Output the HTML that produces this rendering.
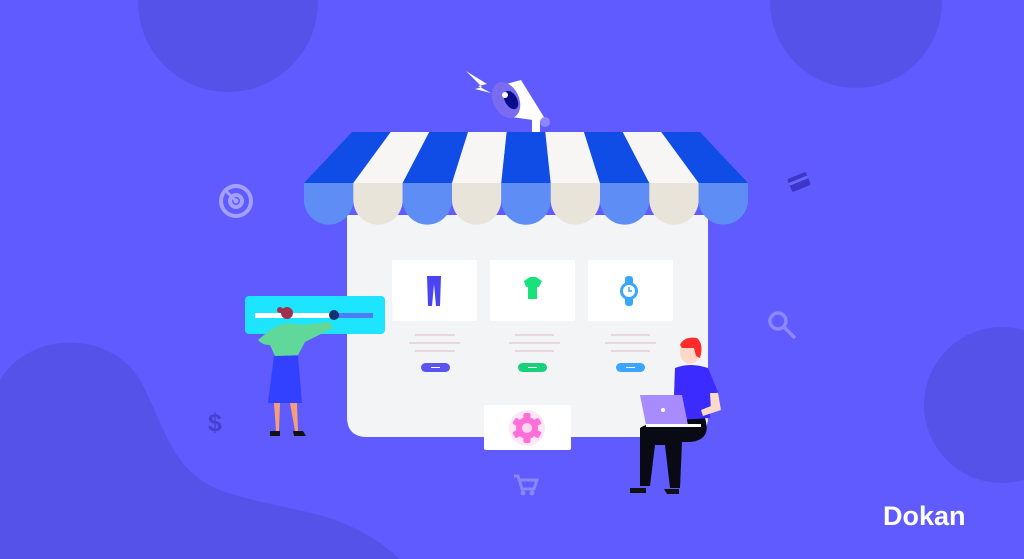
<!DOCTYPE html>
<html><head><meta charset="utf-8"><style>
html,body{margin:0;padding:0;background:#5f5bff;}
svg{display:block}
</style></head><body>
<svg width="1024" height="559" viewBox="0 0 1024 559" xmlns="http://www.w3.org/2000/svg">
<rect width="1024" height="559" fill="#5f5bff"/>
<g fill="#5552ea">
<circle cx="228" cy="2" r="90"/>
<circle cx="856" cy="2" r="86"/>
<circle cx="1002" cy="405" r="78"/>
<path d="M0 380 C30 330 110 330 140 380 C165 425 170 470 220 490 C290 515 340 505 400 559 L0 559 Z"/>
</g>
<path d="M347 215 H708 V417 Q708 437 688 437 H367 Q347 437 347 417 Z" fill="#f3f4f6"/>
<g>
<polygon points="352,132 390.7,132 353.3,183 304,183" fill="#0f4de6"/>
<polygon points="390.7,132 429.3,132 402.7,183 353.3,183" fill="#f7f6f5"/>
<polygon points="429.3,132 468,132 452,183 402.7,183" fill="#0f4de6"/>
<polygon points="468,132 506.7,132 501.3,183 452,183" fill="#f7f6f5"/>
<polygon points="506.7,132 545.3,132 550.7,183 501.3,183" fill="#0f4de6"/>
<polygon points="545.3,132 584,132 600,183 550.7,183" fill="#f7f6f5"/>
<polygon points="584,132 622.7,132 649.3,183 600,183" fill="#0f4de6"/>
<polygon points="622.7,132 661.3,132 698.7,183 649.3,183" fill="#f7f6f5"/>
<polygon points="661.3,132 700,132 748,183 698.7,183" fill="#0f4de6"/>
</g>
<g>
<path d="M304 183 h49.3 v17 a24.65 24.65 0 0 1 -49.3 0 z" fill="#5e8ef5"/>
<path d="M353.3 183 h49.4 v17 a24.7 24.7 0 0 1 -49.4 0 z" fill="#e8e4da"/>
<path d="M402.7 183 h49.3 v17 a24.65 24.65 0 0 1 -49.3 0 z" fill="#5e8ef5"/>
<path d="M452 183 h49.3 v17 a24.65 24.65 0 0 1 -49.3 0 z" fill="#e8e4da"/>
<path d="M501.3 183 h49.4 v17 a24.7 24.7 0 0 1 -49.4 0 z" fill="#5e8ef5"/>
<path d="M550.7 183 h49.3 v17 a24.65 24.65 0 0 1 -49.3 0 z" fill="#e8e4da"/>
<path d="M600 183 h49.3 v17 a24.65 24.65 0 0 1 -49.3 0 z" fill="#5e8ef5"/>
<path d="M649.3 183 h49.4 v17 a24.7 24.7 0 0 1 -49.4 0 z" fill="#e8e4da"/>
<path d="M698.7 183 h49.3 v17 a24.65 24.65 0 0 1 -49.3 0 z" fill="#5e8ef5"/>
</g>
<!-- megaphone -->
<polygon points="466,71 487,84 478,86 491,93 475,89 482,87" fill="#fff"/>
<polygon points="506,84 521,80 547,122 504,116" fill="#fff"/>
<ellipse cx="506" cy="100" rx="13" ry="19" transform="rotate(-25 506 100)" fill="#7a6cf0"/>
<ellipse cx="511" cy="100" rx="6" ry="10" transform="rotate(-30 511 100)" fill="#0a0d8a"/>
<circle cx="505" cy="95" r="3" fill="#fff"/>
<circle cx="545" cy="122" r="5" fill="#8d86ff"/>
<rect x="532" y="118" width="8" height="14" fill="#fff"/>
<!-- cards -->
<rect x="392" y="260" width="85" height="61" rx="2" fill="#fff"/>
<rect x="490" y="260" width="85" height="61" rx="2" fill="#fff"/>
<rect x="588" y="260" width="85" height="61" rx="2" fill="#fff"/>
<path d="M427 276 h14 l-1 30 h-4 l-2 -22 l-2 22 h-4 z" fill="#4a45f0"/>
<path d="M524 281 l6 -4 h6 l6 4 l-3 6 h-2 v12 h-9 v-12 h-2 z" fill="#18e27a"/>
<rect x="625" y="276" width="8" height="30" rx="3" fill="#3aa6ff"/>
<circle cx="629" cy="291" r="9" fill="#3aa6ff"/>
<circle cx="629" cy="291" r="6" fill="#fff"/>
<path d="M629 287 v4 h3" stroke="#3aa6ff" stroke-width="1.4" fill="none"/>
<g stroke="#e5cdd0" stroke-width="1.5">
<line x1="415" y1="335" x2="455" y2="335"/><line x1="409" y1="343" x2="460" y2="343"/><line x1="415" y1="351" x2="455" y2="351"/>
<line x1="515" y1="335" x2="554" y2="335"/><line x1="509" y1="343" x2="560" y2="343"/><line x1="515" y1="351" x2="554" y2="351"/>
<line x1="611" y1="335" x2="650" y2="335"/><line x1="605" y1="343" x2="656" y2="343"/><line x1="611" y1="351" x2="650" y2="351"/>
</g>
<rect x="421" y="363" width="29" height="9" rx="4.5" fill="#5b54f0"/>
<rect x="518" y="363" width="29" height="9" rx="4.5" fill="#18d27a"/>
<rect x="616" y="363" width="29" height="9" rx="4.5" fill="#3aa6ff"/>
<g stroke="#fff" stroke-width="1"><line x1="431" y1="367.5" x2="440" y2="367.5"/><line x1="528" y1="367.5" x2="537" y2="367.5"/><line x1="626" y1="367.5" x2="635" y2="367.5"/></g>
<rect x="484" y="405" width="87" height="45" rx="2" fill="#fff"/>
<circle cx="527" cy="428" r="18" fill="#ffd6f4" opacity="0.6"/>
<g fill="#ff6fd8" transform="translate(527 428)">
<circle r="11"/>
<rect x="-3.5" y="-15" width="7" height="30" rx="1.5"/>
<rect x="-3.5" y="-15" width="7" height="30" rx="1.5" transform="rotate(60)"/>
<rect x="-3.5" y="-15" width="7" height="30" rx="1.5" transform="rotate(120)"/>
</g>
<circle cx="527" cy="428" r="5" fill="#ffd6f0"/>
<rect x="245" y="296" width="140" height="38" rx="4" fill="#1de4ff"/>
<rect x="255" y="313" width="75" height="5" fill="#fff"/>
<rect x="330" y="313" width="43" height="5" fill="#4d7cf5"/>
<circle cx="334" cy="315" r="5" fill="#14306e"/>
<!-- woman -->
<circle cx="287" cy="313" r="6" fill="#a0304f"/>
<circle cx="280" cy="310" r="3" fill="#a0304f"/>
<path d="M270 330 Q285 320 300 325 L330 322 L333 328 L305 342 L298 355 L275 356 L270 345 Q262 345 258 340 Z" fill="#5fd89a"/>
<path d="M274 356 h24 l4 47 h-34 z" fill="#3240ff"/>
<path d="M274 403 l2 28 h3 l1-28 z M290 403 l5 28 h3 l-1 -28z" fill="#f59f7a"/>
<path d="M270 431 h10 v5 h-10 z M293 431 h10 l3 5 h-12 z" fill="#111"/>
<!-- man -->
<path d="M640 428 Q650 420 705 418 Q712 440 690 442 L682 442 L680 488 L670 488 L665 445 L655 445 L650 486 L640 486 Z" fill="#0a0a14"/>
<path d="M630 488 h16 v5 h-16 z M664 489 h15 v5 h-12 z" fill="#111"/>
<path d="M675 368 Q690 362 708 368 L718 392 L710 395 L710 418 L678 420 L674 395 Z" fill="#3b2bff"/>
<path d="M710 393 l8 0 l3 17 l-18 6 l-2 -6 l10 -4 z" fill="#fbd9c8"/>
<ellipse cx="690" cy="352" rx="10" ry="12" fill="#fbd9c8"/>
<path d="M680 345 Q684 336 697 338 Q704 344 700 358 L696 356 L694 348 L682 348 Z" fill="#ff2a2a"/>
<polygon points="640,395 682,395 688,425 646,425" fill="#a88bff"/>
<rect x="646" y="424" width="55" height="3" fill="#fff"/>
<circle cx="663" cy="410" r="2" fill="#fff"/>
<!-- small icons -->
<g fill="none" stroke="#a3a0ff" stroke-width="4">
<circle cx="236" cy="201" r="15"/><circle cx="236" cy="201" r="6"/>
</g>
<g fill="none" stroke="#8c88ff" stroke-width="3.5">
<circle cx="778" cy="321" r="8"/><line x1="784" y1="327" x2="795" y2="338"/>
</g>
<circle cx="236" cy="201" r="2.5" fill="#a3a0ff"/>
<line x1="236" y1="201" x2="224" y2="189" stroke="#a3a0ff" stroke-width="3"/>
<g transform="rotate(-22 799 182)"><rect x="789" y="175" width="20" height="14" rx="2" fill="#3d36c8"/><rect x="789" y="179" width="20" height="3" fill="#6b65ff"/></g>
<text x="208" y="431" font-family="Liberation Sans, sans-serif" font-weight="bold" font-size="25" fill="#4541d0">$</text>
<path d="M514 476 h4 l4 13 h12 l3 -9 h-17" fill="none" stroke="#8a86ff" stroke-width="3"/>
<circle cx="523" cy="493" r="2.5" fill="#8a86ff"/><circle cx="532" cy="493" r="2.5" fill="#8a86ff"/>
<text x="883" y="525" font-family="Liberation Sans, sans-serif" font-weight="bold" font-size="27" fill="#fff">Dokan</text>
</svg>
</body></html>
